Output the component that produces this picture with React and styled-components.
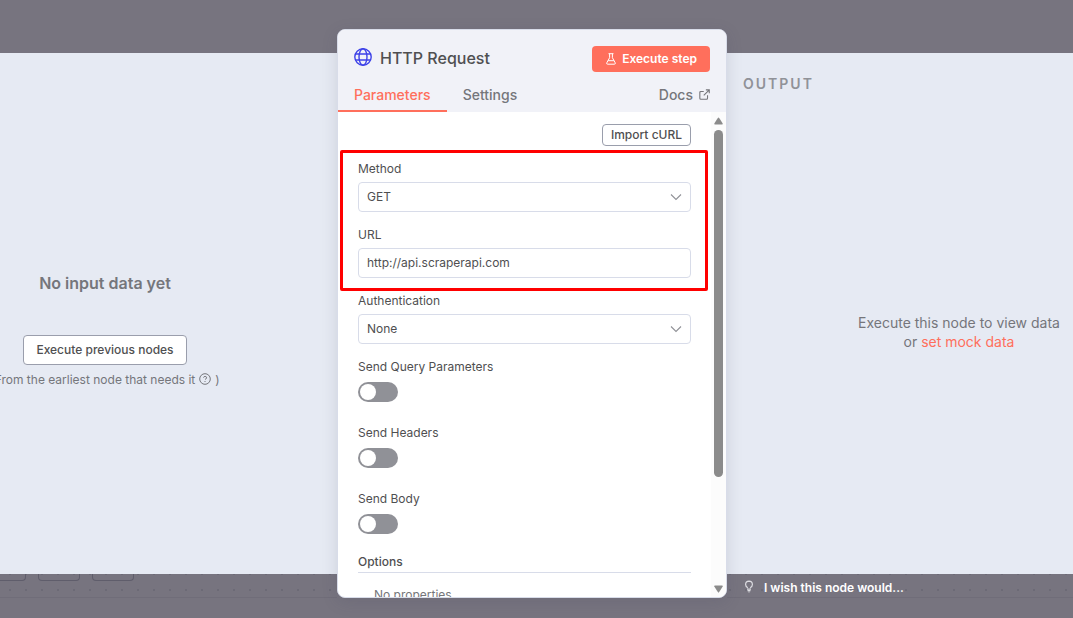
import React, { useState } from "react";
import styled, { createGlobalStyle, css } from "styled-components";

const colors = {
  overlay: "#77747f",
  overlayLine: "#6c6a76",
  panel: "#e6eaf3",
  header: "#f1f2f8",
  border: "#d8dce9",
  strong: "#9a9eac",
  text: "#4f4f51",
  muted: "#75767b",
  primary: "#ff6f5c",
  highlight: "#ff0000"
};

const GlobalStyle = createGlobalStyle`
  *, *::before, *::after {
    box-sizing: border-box;
  }

  body {
    margin: 0;
    background: ${colors.overlay};
    color: ${colors.text};
    font-family: Inter, "Open Sans", sans-serif;
    font-size: 12px;
    line-height: 18px;
  }

  button, input, select {
    font: inherit;
    color: inherit;
    margin: 0;
  }

  h1, h2, h3, p {
    margin: 0;
  }
`;

const StyledPage = styled.main`
  height: 100vh;
  min-height: 400px;
  padding: 29px 0 20px;
  display: grid;
  grid-template-columns: minmax(0, 337fr) 390px minmax(0, 346fr);
  grid-template-rows: minmax(0, 1fr);
  overflow: hidden;
`;

const StyledSide = styled.section`
  min-width: 0;
  display: flex;
  flex-direction: column;
  padding-top: 24px;
`;

const StyledPanel = styled.div`
  flex: 1;
  min-height: 0;
  display: flex;
  flex-direction: column;
  align-items: center;
  background: ${colors.panel};
  color: ${colors.muted};
  overflow: hidden;
`;

const StyledInputPanel = styled(StyledPanel)`
  justify-content: center;
  padding: 32px 127px 0 0;
  white-space: nowrap;
`;

const StyledOutputPanel = styled(StyledPanel)`
  align-items: stretch;
`;

const StyledCanvas = styled.div`
  flex: none;
  height: 24px;
  display: flex;
  gap: 12px;
  overflow: hidden;
  border-bottom: 1px solid #706d79;
  background-image: radial-gradient(
    circle at 2px 8px,
    ${colors.overlayLine} 1px,
    transparent 1px
  );
  background-size: 16px 16px;
  background-position: ${({ $dotOffset }) => $dotOffset}px 8px;
`;

const StyledChip = styled.span`
  width: ${({ $cut }) => ($cut ? 26 : 42)}px;
  height: 7px;
  border: 1px solid #5f5d6b;
  border-top: 0;
  border-left-width: ${({ $cut }) => ($cut ? 0 : 1)}px;
  border-radius: ${({ $cut }) => ($cut ? "0 0 4px 0" : "0 0 4px 4px")};
`;

const StyledEmptyTitle = styled.h2`
  font-size: 16px;
  line-height: 24px;
  font-weight: 600;
  margin-bottom: 40px;
`;

const StyledOutlineButton = styled.button`
  height: ${({ $small }) => ($small ? 22 : 30)}px;
  padding: 0 ${({ $small }) => ($small ? 8 : 12)}px;
  border: 1px solid ${colors.strong};
  border-radius: 4px;
  background: #fff;
  color: ${colors.text};
  font-weight: 500;
  white-space: nowrap;
`;

const StyledHint = styled.p`
  display: flex;
  align-items: center;
  gap: 4px;
  margin-top: 6px;

  > svg {
    margin-bottom: 2px;
  }
`;

const StyledOutputTitle = styled.h2`
  padding: 22px 16px 0;
  font-size: 14px;
  line-height: 18px;
  font-weight: 600;
  letter-spacing: 2px;
  color: #909298;
`;

const StyledOutputMessage = styled.div`
  flex: 1;
  display: flex;
  align-items: center;
  justify-content: center;
  padding: 0 0 4px 118px;
  font-size: 14px;
  line-height: 19px;
  text-align: center;
  white-space: nowrap;
`;

const StyledMockLink = styled.a`
  color: ${colors.primary};
  text-decoration: none;
`;

const StyledWish = styled.a`
  display: flex;
  align-items: center;
  gap: 10px;
  padding: 4px 0 0 17px;
  color: #fff;
  font-weight: 600;
  text-decoration: none;

  > svg {
    margin-bottom: 3px;
  }
`;

const StyledModal = styled.section`
  position: relative;
  min-height: 0;
  display: flex;
  flex-direction: column;
  overflow: hidden;
  border: 1px solid ${colors.border};
  border-radius: 8px;
  background: #fff;
  box-shadow: 0 4px 16px rgba(60, 60, 90, 0.15);
`;

const StyledHeader = styled.header`
  flex: none;
  background: ${colors.header};
`;

const StyledTitleRow = styled.div`
  display: flex;
  align-items: flex-start;
  gap: 8px;
  padding: 16px 16px 8px;
`;

const StyledTitle = styled.h1`
  flex: 1;
  font-size: 16px;
  line-height: 24px;
  font-weight: 500;
`;

const StyledExecute = styled.button`
  display: flex;
  align-items: center;
  gap: 5px;
  height: 26px;
  padding: 0 13px;
  border: 0;
  border-radius: 4px;
  background: ${colors.primary};
  color: #fff;
  font-weight: 600;
`;

const StyledTabs = styled.nav`
  display: flex;
  height: 32px;
`;

const tabText = css`
  font-size: 14px;
  line-height: 20px;
  font-weight: 500;
  color: ${colors.muted};
`;

const StyledTab = styled.button`
  ${tabText}
  padding: 0 16px;
  border: 0;
  border-bottom: 2px solid transparent;
  background: none;
  ${({ $active }) =>
    $active &&
    css`
      color: ${colors.primary};
      border-color: ${colors.primary};
    `}
`;

const StyledDocs = styled.a`
  ${tabText}
  display: flex;
  align-items: center;
  gap: 6px;
  margin-left: auto;
  padding: 0 16px 2px;
  text-decoration: none;

  > svg {
    margin-bottom: 2px;
  }
`;

const StyledBody = styled.div`
  flex: 1;
  min-height: 0;
  display: flex;
`;

const StyledForm = styled.form`
  flex: 1;
  min-width: 0;
  overflow: hidden;
  padding: 12px 20px 0;
`;

const StyledActions = styled.div`
  display: flex;
  justify-content: flex-end;
  margin-bottom: 14px;
`;

const StyledHighlight = styled.div`
  position: relative;

  &::after {
    content: "";
    position: absolute;
    inset: -10px -17px 1px -18px;
    border: 3px solid ${colors.highlight};
    border-radius: 2px;
    pointer-events: none;
  }
`;

const StyledField = styled.div`
  height: 66px;
  display: flex;
  flex-direction: column;
  align-items: flex-start;
  gap: ${({ $switch }) => ($switch ? 6 : 4)}px;
`;

const StyledLabel = styled.label`
  line-height: 18px;
`;

const control = css`
  width: 100%;
  height: 30px;
  padding: 0 8px;
  border: 1px solid ${colors.border};
  border-radius: 4px;
  background: #fff;
  outline: none;
`;

const StyledInput = styled.input`
  ${control}
  padding-bottom: 2px;
`;

const StyledSelectWrap = styled.div`
  width: 100%;
  display: grid;
  align-items: center;

  > * {
    grid-area: 1 / 1;
  }

  > svg {
    justify-self: end;
    margin-right: 9px;
    pointer-events: none;
  }
`;

const StyledSelect = styled.select`
  ${control}
  appearance: none;
`;

const StyledSwitch = styled.input`
  appearance: none;
  display: flex;
  align-items: center;
  width: 40px;
  height: 20px;
  padding: 0 2px;
  border-radius: 10px;
  background: ${({ checked }) => (checked ? colors.primary : "#909197")};
  justify-content: ${({ checked }) => (checked ? "flex-end" : "flex-start")};

  &::before {
    content: "";
    width: 16px;
    height: 16px;
    border-radius: 50%;
    background: #fff;
  }
`;

const StyledOptions = styled.h3`
  margin-top: -3px;
  padding-bottom: 1px;
  border-bottom: 1px solid ${colors.border};
  font-size: 12px;
  line-height: 18px;
  font-weight: 500;
`;

const StyledNoProperties = styled.p`
  padding: 13px 16px;
  color: ${colors.muted};
`;

const StyledScrollbar = styled.div`
  flex: none;
  width: 15px;
  display: flex;
  flex-direction: column;
  align-items: center;
  gap: 5px;
  padding: 5px 0 4px;
  background: #fcfcfc;
`;

const StyledTrack = styled.div`
  flex: 1;
  width: 9px;
`;

const StyledThumb = styled.div`
  height: 77%;
  border-radius: 5px;
  background: #8b8b8b;
`;

const Globe = () => (
  <svg width="18" height="22" viewBox="0 -2 18 22" fill="none" stroke="#3e42e8" strokeWidth="1.4">
    <circle cx="9" cy="9" r="8.2" />
    <ellipse cx="9" cy="9" rx="4" ry="8.2" />
    <path d="M1.5 6h15M1.5 12h15" />
  </svg>
);

const Flask = () => (
  <svg width="12" height="12" viewBox="0 0 12 12" fill="none" stroke="#fff" strokeWidth="1">
    <path d="M3.5.7h5M4.6.7v4L1.8 9.8q-.5 1.4.8 1.4h6.8q1.3 0 .8-1.4L7.4 4.7V.7M3.1 7.7h5.8" />
  </svg>
);

const External = () => (
  <svg width="11" height="11" viewBox="0 0 12 12" fill="none" stroke="#75767b" strokeWidth="1.2">
    <path d="M7.5 1h3.7v3.7M11 1.2 5.2 7M5.2 2.7H2q-1.100 0-1.100 1.100V10q0 1.100 1.100 1.100h6.200q1.100 0 1.100-1.100V6.800" />
  </svg>
);

const Chevron = () => (
  <svg width="12" height="8" viewBox="0 0 12 8" fill="none" stroke="#909197" strokeWidth="1.1">
    <path d="m1 1.5 5 5 5-5" />
  </svg>
);

const Question = () => (
  <svg width="12" height="12" viewBox="0 0 12 12" fill="none" stroke="#75767b" strokeWidth="1">
    <circle cx="6" cy="6" r="5.3" />
    <path d="M4.500 4.600q.3-1.200 1.600-1.200 1.500.1 1.500 1.400 0 1-1.500 1.600M6 8v1" />
  </svg>
);

const Bulb = () => (
  <svg width="10" height="13" viewBox="0 0 10 13" fill="none" stroke="#dddde2" strokeWidth="1.2">
    <path d="M3.800 7.800Q1.600 6.700 1.600 4.500 1.700 1.200 5 1.100q3.300.1 3.400 3.400 0 2.200-2.200 3.300M3 9.100h4M3.500 10.600h3M4.500 12h1" />
  </svg>
);

const Arrow = ({ down }) => (
  <svg width="9" height="8" viewBox="0 0 9 8" fill="#8b8b8b">
    <path
      d={
        down
          ? "M1 .5h7q1 0 .7 1L5.2 7q-.7 1-1.4 0L.3 1.500Q0 .5 1 .5Z"
          : "M1 7.500h7q1 0 .7-1L5.200 1q-.7-1-1.400 0L.3 6.500Q0 7.500 1 7.500Z"
      }
    />
  </svg>
);

const SelectField = ({ id, label, options }) => (
  <StyledField>
    <StyledLabel htmlFor={id}>{label}</StyledLabel>
    <StyledSelectWrap>
      <StyledSelect id={id}>
        {options.map(option => (
          <option key={option}>{option}</option>
        ))}
      </StyledSelect>
      <Chevron />
    </StyledSelectWrap>
  </StyledField>
);

const SwitchField = ({ id, label }) => {
  const [checked, setChecked] = useState(false);

  return (
    <StyledField $switch>
      <StyledLabel htmlFor={id}>{label}</StyledLabel>
      <StyledSwitch
        id={id}
        type="checkbox"
        role="switch"
        checked={checked}
        onChange={() => setChecked(!checked)}
      />
    </StyledField>
  );
};

const InputSide = () => (
  <StyledSide>
    <StyledInputPanel>
      <StyledEmptyTitle>No input data yet</StyledEmptyTitle>
      <StyledOutlineButton type="button">Execute previous nodes</StyledOutlineButton>
      <StyledHint>
        (From the earliest node that needs it <Question /> )
      </StyledHint>
    </StyledInputPanel>
    <StyledCanvas $dotOffset={8}>
      <StyledChip $cut />
      <StyledChip />
      <StyledChip />
    </StyledCanvas>
  </StyledSide>
);

const OutputSide = () => (
  <StyledSide>
    <StyledOutputPanel>
      <StyledOutputTitle>OUTPUT</StyledOutputTitle>
      <StyledOutputMessage>
        <p>
          Execute this node to view data
          <br />
          or <StyledMockLink href="#mock">set mock data</StyledMockLink>
        </p>
      </StyledOutputMessage>
    </StyledOutputPanel>
    <StyledCanvas $dotOffset={1}>
      <StyledWish href="#feedback">
        <Bulb />
        I wish this node would...
      </StyledWish>
    </StyledCanvas>
  </StyledSide>
);

const NodeModal = () => {
  const [tab, setTab] = useState("Parameters");

  return (
    <StyledModal>
      <StyledHeader>
        <StyledTitleRow>
          <Globe />
          <StyledTitle>HTTP Request</StyledTitle>
          <StyledExecute type="button">
            <Flask />
            Execute step
          </StyledExecute>
        </StyledTitleRow>
        <StyledTabs>
          {["Parameters", "Settings"].map(name => (
            <StyledTab
              key={name}
              type="button"
              $active={tab === name}
              onClick={() => setTab(name)}
            >
              {name}
            </StyledTab>
          ))}
          <StyledDocs href="#docs">
            Docs <External />
          </StyledDocs>
        </StyledTabs>
      </StyledHeader>
      <StyledBody>
        <StyledForm>
          <StyledActions>
            <StyledOutlineButton type="button" $small>
              Import cURL
            </StyledOutlineButton>
          </StyledActions>
          <StyledHighlight>
            <SelectField id="method" label="Method" options={["GET", "POST", "PUT", "DELETE"]} />
            <StyledField>
              <StyledLabel htmlFor="url">URL</StyledLabel>
              <StyledInput id="url" type="text" defaultValue="http://api.scraperapi.com" />
            </StyledField>
          </StyledHighlight>
          <SelectField id="auth" label="Authentication" options={["None", "Generic"]} />
          <SwitchField id="query" label="Send Query Parameters" />
          <SwitchField id="headers" label="Send Headers" />
          <SwitchField id="body" label="Send Body" />
          <StyledOptions>Options</StyledOptions>
          <StyledNoProperties>No properties</StyledNoProperties>
        </StyledForm>
        <StyledScrollbar aria-hidden="true">
          <Arrow />
          <StyledTrack>
            <StyledThumb />
          </StyledTrack>
          <Arrow down />
        </StyledScrollbar>
      </StyledBody>
    </StyledModal>
  );
};

const App = () => (
  <>
    <GlobalStyle />
    <StyledPage>
      <InputSide />
      <NodeModal />
      <OutputSide />
    </StyledPage>
  </>
);

export default App;
